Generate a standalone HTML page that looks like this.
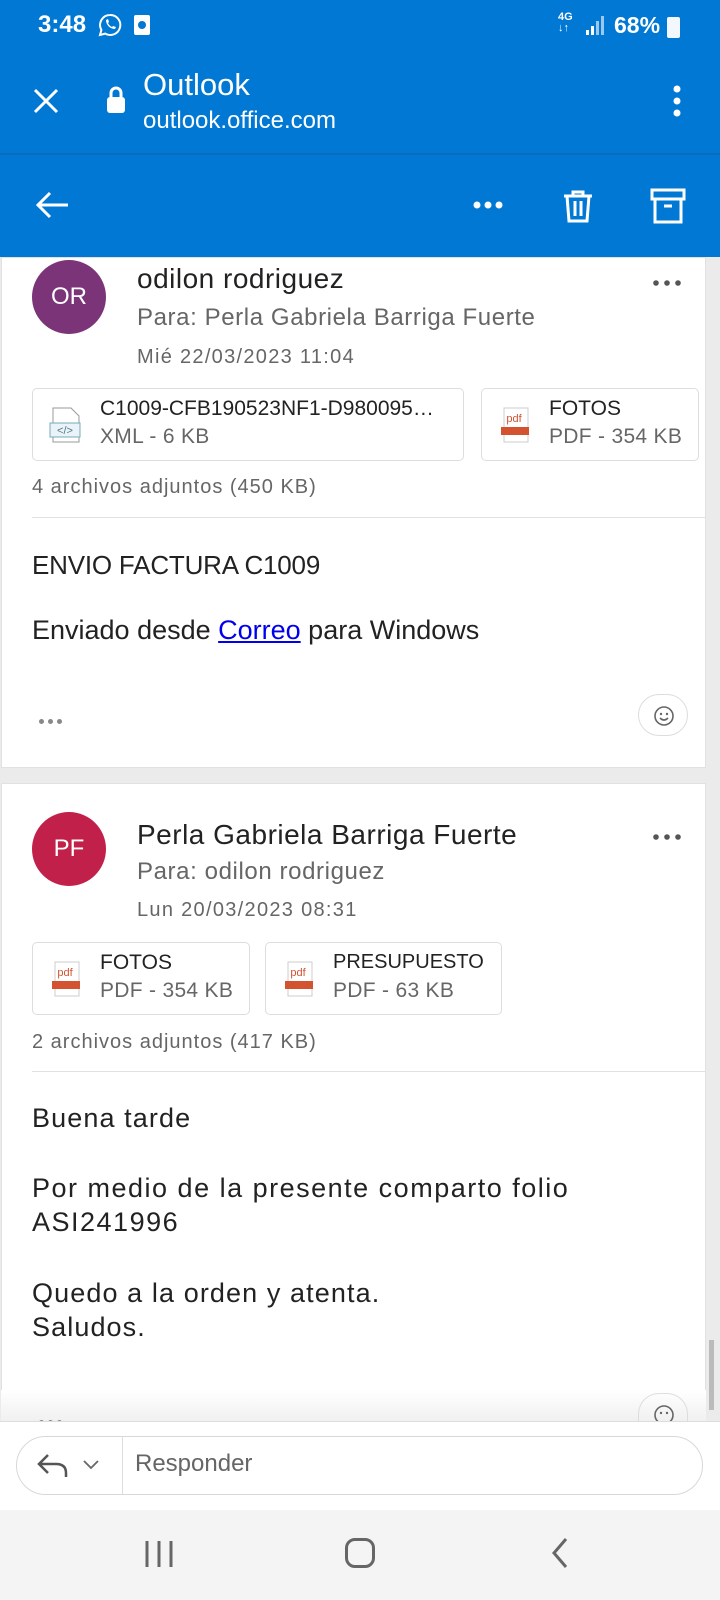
<!DOCTYPE html>
<html><head><meta charset="utf-8"><style>
*{margin:0;padding:0;box-sizing:border-box}
body{width:720px;height:1600px;overflow:hidden;background:#ebebeb;font-family:"Liberation Sans",sans-serif;position:relative;color:#222}
.a{position:absolute}
.blue{left:0;top:0;width:720px;height:257px;background:#0078d4}
.card{background:#fff;left:1px;width:705px;border:1px solid #e1e1e1}
.av{width:74px;height:74px;border-radius:50%;color:#fff;font-size:24px;text-align:center;line-height:74px}
.name{font-size:28px;color:#222;letter-spacing:.5px}
.sub{font-size:24px;color:#666;letter-spacing:.6px}
.date{font-size:20px;color:#666;letter-spacing:1.3px}
.att{background:#fff;border:1px solid #ddd;border-radius:5px;height:73px}
.att .t{position:absolute;left:67px;top:8px;font-size:21px;color:#222;white-space:nowrap}
.att .s{position:absolute;left:67px;top:36px;font-size:21px;color:#666;letter-spacing:.3px}
.body{font-size:27px;color:#222;letter-spacing:.7px}
.dots span{display:inline-block;width:5px;height:5px;border-radius:50%;background:#888;margin-right:4px}
.smile{width:50px;height:42px;border:1px solid #ddd;border-radius:21px}
</style></head><body>
<div class="a blue"></div>
<div class="a" style="left:38px;top:11px;font-size:24px;font-weight:bold;color:#fff">3:48</div>
<svg class="a" style="left:98px;top:13px" width="24" height="24" viewBox="0 0 24 24"><path d="M12 2a10 10 0 0 0-8.6 15L2 22l5.2-1.4A10 10 0 1 0 12 2z" fill="none" stroke="#fff" stroke-width="2"/><path d="M8 7c0 5 4 9 9 9l1-2-3-1-1 1c-2-1-3-2-4-4l1-1-1-3z" fill="#fff"/></svg>
<div class="a" style="left:134px;top:15px;width:16px;height:20px;background:#fff;border-radius:2px"><div class="a" style="left:4px;top:6px;width:8px;height:8px;border-radius:50%;background:#0078d4"></div></div>
<div class="a" style="left:558px;top:12px;font-size:11px;font-weight:bold;color:#fff;line-height:11px">4G<br>↓↑</div>
<svg class="a" style="left:586px;top:16px" width="18" height="20"><rect x="0" y="14" width="3" height="5" fill="#fff"/><rect x="5" y="10" width="3" height="9" fill="#fff"/><rect x="10" y="5" width="3" height="14" fill="#fff" opacity=".6"/><rect x="15" y="0" width="3" height="19" fill="#fff" opacity=".6"/></svg>
<div class="a" style="left:614px;top:12px;font-size:23px;font-weight:bold;color:#fff">68%</div>
<div class="a" style="left:667px;top:17px;width:13px;height:21px;background:#fff;border-radius:2px;opacity:.95"></div>
<svg class="a" style="left:32px;top:87px" width="28" height="28"><path d="M3 3L25 25M25 3L3 25" stroke="#fff" stroke-width="3"/></svg>
<svg class="a" style="left:105px;top:85px" width="22" height="30"><path d="M6 13V8a5 5 0 0 1 10 0v5" fill="none" stroke="#fff" stroke-width="3"/><rect x="2" y="12" width="18" height="16" rx="3" fill="#fff"/></svg>
<div class="a" style="left:143px;top:67px;font-size:31px;color:#fff">Outlook</div>
<div class="a" style="left:143px;top:107px;font-size:24px;color:#fff">outlook.office.com</div>
<svg class="a" style="left:670px;top:84px" width="14" height="34"><circle cx="7" cy="5" r="3.5" fill="#fff"/><circle cx="7" cy="17" r="3.5" fill="#fff"/><circle cx="7" cy="29" r="3.5" fill="#fff"/></svg>
<div class="a" style="left:0;top:153px;width:720px;height:2px;background:#0a6bbd"></div>
<svg class="a" style="left:34px;top:190px" width="36" height="30"><path d="M34 15H4M16 3L4 15l12 12" fill="none" stroke="#fff" stroke-width="3"/></svg>
<svg class="a" style="left:472px;top:200px" width="32" height="10"><circle cx="5" cy="5" r="3.5" fill="#fff"/><circle cx="16" cy="5" r="3.5" fill="#fff"/><circle cx="27" cy="5" r="3.5" fill="#fff"/></svg>
<svg class="a" style="left:562px;top:188px" width="32" height="36"><path d="M2 8h28M11 8V4h10v4M5 8l2 25h18l2-25M13 13v15M19 13v15" fill="none" stroke="#fff" stroke-width="3"/></svg>
<svg class="a" style="left:650px;top:188px" width="36" height="36"><rect x="2" y="2" width="32" height="9" fill="none" stroke="#fff" stroke-width="3"/><path d="M5 11v23h26V11M14 18h8" fill="none" stroke="#fff" stroke-width="3"/></svg>

<div class="a card" style="top:257px;height:511px"></div>
<div class="a av" style="left:32px;top:260px;background:#7b3478">OR</div>
<div class="a name" style="left:137px;top:263px">odilon rodriguez</div>
<div class="a sub" style="left:137px;top:304px">Para: Perla Gabriela Barriga Fuerte</div>
<div class="a date" style="left:137px;top:346px">Mié 22/03/2023 11:04</div>
<svg class="a" style="left:652px;top:279px" width="30" height="8"><circle cx="4" cy="4" r="2.8" fill="#555"/><circle cx="15" cy="4" r="2.8" fill="#555"/><circle cx="26" cy="4" r="2.8" fill="#555"/></svg>
<div class="a att" style="left:32px;top:388px;width:432px">
<svg class="a" style="left:16px;top:18px" width="34" height="38"><path d="M4 1h18l8 8v26H4z" fill="#fff" stroke="#999"/><rect x="1" y="16" width="30" height="14" fill="#eaf3f8" stroke="#7ab"/><text x="16" y="27" font-size="11" fill="#578" text-anchor="middle" font-family="Liberation Sans">&lt;/&gt;</text></svg>
<div class="t">C1009-CFB190523NF1-D980095…</div><div class="s">XML - 6 KB</div></div>
<div class="a att" style="left:481px;top:388px;width:218px">
<svg class="a" style="left:18px;top:18px" width="32" height="38"><path d="M4 1h24v34H4z" fill="#fff" stroke="#ccc"/><text x="14" y="15" font-size="11" fill="#d35230" text-anchor="middle" font-family="Liberation Sans">pdf</text><rect x="1" y="20" width="28" height="8" fill="#d35230"/></svg>
<div class="t">FOTOS</div><div class="s">PDF - 354 KB</div></div>
<div class="a date" style="left:32px;top:476px;letter-spacing:1px">4 archivos adjuntos (450 KB)</div>
<div class="a" style="left:32px;top:517px;width:674px;height:1px;background:#e1e1e1"></div>
<div class="a body" style="left:32px;top:550px;font-size:26px;letter-spacing:-.2px">ENVIO FACTURA C1009</div>
<div class="a body" style="left:32px;top:615px;letter-spacing:0">Enviado desde <span style="color:#0000ee;text-decoration:underline">Correo</span> para Windows</div>
<div class="a dots" style="left:39px;top:711px"><span></span><span></span><span></span></div>
<div class="a smile" style="left:638px;top:694px"><svg class="a" style="left:14px;top:10px" width="22" height="22"><circle cx="11" cy="11" r="9" fill="none" stroke="#666" stroke-width="1.6"/><circle cx="8" cy="9" r="1.2" fill="#666"/><circle cx="14" cy="9" r="1.2" fill="#666"/><path d="M7 13q4 4 8 0" fill="none" stroke="#666" stroke-width="1.6"/></svg></div>

<div class="a card" style="top:783px;height:640px"></div>
<div class="a av" style="left:32px;top:812px;background:#c0204a">PF</div>
<div class="a name" style="left:137px;top:819px">Perla Gabriela Barriga Fuerte</div>
<div class="a sub" style="left:137px;top:858px">Para: odilon rodriguez</div>
<div class="a date" style="left:137px;top:899px">Lun 20/03/2023 08:31</div>
<svg class="a" style="left:652px;top:833px" width="30" height="8"><circle cx="4" cy="4" r="2.8" fill="#555"/><circle cx="15" cy="4" r="2.8" fill="#555"/><circle cx="26" cy="4" r="2.8" fill="#555"/></svg>
<div class="a att" style="left:32px;top:942px;width:218px">
<svg class="a" style="left:18px;top:18px" width="32" height="38"><path d="M4 1h24v34H4z" fill="#fff" stroke="#ccc"/><text x="14" y="15" font-size="11" fill="#d35230" text-anchor="middle" font-family="Liberation Sans">pdf</text><rect x="1" y="20" width="28" height="8" fill="#d35230"/></svg>
<div class="t">FOTOS</div><div class="s">PDF - 354 KB</div></div>
<div class="a att" style="left:265px;top:942px;width:237px">
<svg class="a" style="left:18px;top:18px" width="32" height="38"><path d="M4 1h24v34H4z" fill="#fff" stroke="#ccc"/><text x="14" y="15" font-size="11" fill="#d35230" text-anchor="middle" font-family="Liberation Sans">pdf</text><rect x="1" y="20" width="28" height="8" fill="#d35230"/></svg>
<div class="t" style="font-size:20px">PRESUPUESTO</div><div class="s">PDF - 63 KB</div></div>
<div class="a date" style="left:32px;top:1031px;letter-spacing:1px">2 archivos adjuntos (417 KB)</div>
<div class="a" style="left:32px;top:1071px;width:674px;height:1px;background:#e1e1e1"></div>
<div class="a body" style="left:32px;top:1103px;letter-spacing:1.1px">Buena tarde</div>
<div class="a body" style="left:32px;top:1171px;line-height:34px;letter-spacing:1.5px">Por medio de la presente comparto folio<br>ASI241996</div>
<div class="a body" style="left:32px;top:1276px;line-height:34px;letter-spacing:1.1px">Quedo a la orden y atenta.<br>Saludos.</div>
<div class="a" style="left:1px;top:1390px;width:705px;height:32px;background:linear-gradient(#fff,#f0f0f0)"></div>
<div class="a dots" style="left:39px;top:1412px"><span></span><span></span><span></span></div>
<div class="a smile" style="left:638px;top:1393px;height:30px;border-bottom:none;border-radius:21px 21px 0 0"><svg class="a" style="left:14px;top:10px" width="22" height="20"><circle cx="11" cy="11" r="9" fill="none" stroke="#666" stroke-width="1.6"/><circle cx="8" cy="9" r="1.2" fill="#666"/><circle cx="14" cy="9" r="1.2" fill="#666"/></svg></div>
<div class="a" style="left:709px;top:1340px;width:5px;height:70px;background:#bbb"></div>

<div class="a" style="left:0;top:1421px;width:720px;height:89px;background:#fff;border-top:1px solid #ddd"></div>
<div class="a" style="left:16px;top:1436px;width:687px;height:59px;border:1px solid #d8d8d8;border-radius:30px"></div>
<div class="a" style="left:122px;top:1437px;width:1px;height:57px;background:#ddd"></div>
<svg class="a" style="left:36px;top:1451px" width="70" height="30"><path d="M30 26v-4q0-9-10-9H4M12 4L3 13l9 9" fill="none" stroke="#555" stroke-width="2.5"/><path d="M48 10l7 7 7-7" fill="none" stroke="#666" stroke-width="1.8"/></svg>
<div class="a" style="left:135px;top:1450px;font-size:24px;color:#666">Responder</div>
<div class="a" style="left:0;top:1510px;width:720px;height:90px;background:#f4f4f4"></div>
<svg class="a" style="left:144px;top:1539px" width="32" height="30"><path d="M3 2v26M15 2v26M27 2v26" stroke="#666" stroke-width="3"/></svg>
<div class="a" style="left:345px;top:1538px;width:30px;height:30px;border:3px solid #666;border-radius:10px"></div>
<svg class="a" style="left:550px;top:1536px" width="20" height="34"><path d="M16 3L4 17l12 14" fill="none" stroke="#666" stroke-width="3"/></svg>
</body></html>
